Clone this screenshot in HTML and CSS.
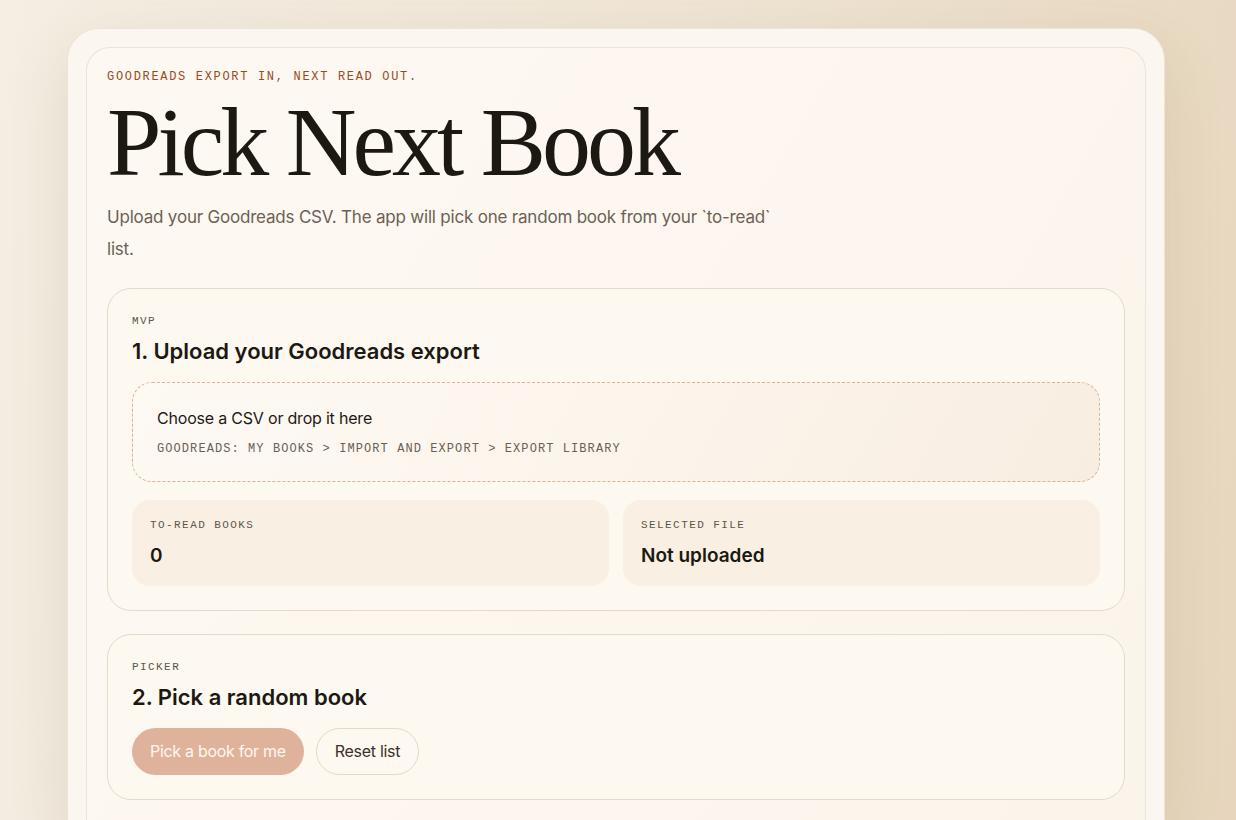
FILE: index.html
```html
<!DOCTYPE html>
<html lang="en">
<head>
  <meta charset="UTF-8" />
  <meta name="viewport" content="width=device-width, initial-scale=1.0"/>
  <title>Pick Next Book</title>
  <link rel="stylesheet" href="styles.css">
</head>
<body>
  <div class="shell">
    <main class="panel">
      <p class="eyebrow">Goodreads export in, next read out.</p>
      <h1 class="title">Pick Next Book</h1>
      <p class="lead">Upload your Goodreads CSV. The app will pick one random book from your `to-read` list.</p>

      <section class="card">
        <p class="card-label">MVP</p>
        <h2 class="card-title">1. Upload your Goodreads export</h2>

        <label class="dropzone" for="csvFile">
          <input type="file" id="csvFile" accept=".csv" />
          <span class="drop-title">Choose a CSV or drop it here</span>
          <span class="drop-hint">Goodreads: My Books &gt; Import and export &gt; Export library</span>
        </label>

        <div class="stats">
          <div class="stat">
            <span class="stat-label">To-read books</span>
            <strong class="stat-value" id="bookCount">0</strong>
          </div>
          <div class="stat">
            <span class="stat-label">Selected file</span>
            <strong class="stat-value" id="fileName">Not uploaded</strong>
          </div>
        </div>
      </section>

      <section class="card">
        <p class="card-label">Picker</p>
        <h2 class="card-title">2. Pick a random book</h2>
        <div class="actions">
          <button class="btn btn-primary" id="pickBtn" disabled>Pick a book for me</button>
          <button class="btn btn-ghost" id="resetBtn">Reset list</button>
        </div>
      </section>
    </main>
  </div>
</body>
</html>
```

FILE: styles.css
```css
* {
  box-sizing: border-box;
}

body {
  margin: 0;
  min-height: 100vh;
  font-family: 'Inter', 'Noto Sans', sans-serif;
  color: #1f1a15;
  background: linear-gradient(100deg, #f4eee3 0%, #efe5d5 50%, #e7d6bd 100%);
  padding: 28px 0 0;
}

.shell {
  width: 1098px;
  margin: 0 0 0 67px;
  padding: 18px 18px 0;
  background: #fbf7f0;
  border-radius: 32px 32px 0 0;
  box-shadow: 0 20px 60px rgba(120, 90, 50, 0.14);
  border: 1px solid #ece4d6;
  border-bottom: none;
}

.panel {
  padding: 22px 20px 24px;
  border: 1px solid #ebe3d6;
  border-bottom: none;
  border-radius: 24px 24px 0 0;
  background: linear-gradient(120deg, #fdf9f2 0%, #fdf6ef 60%, #fbf4ea 100%);
  min-height: 780px;
}

.eyebrow {
  margin: 0;
  font-family: 'Liberation Mono', monospace;
  font-size: 12px;
  letter-spacing: 0.14em;
  text-transform: uppercase;
  color: #9a4a24;
}

.title {
  margin: 5px 0 0;
  font-family: 'Liberation Serif', serif;
  font-weight: 400;
  font-size: 98px;
  line-height: 1.1;
  letter-spacing: -4px;
  color: #1c1913;
}

.lead {
  margin: 4px 0 0;
  max-width: 690px;
  font-size: 17px;
  line-height: 32px;
  color: #6b6157;
  letter-spacing: -0.2px;
}

.card {
  margin-top: 23px;
  padding: 26px 24px 24px;
  border: 1px solid #e3dccd;
  border-radius: 24px;
  background: #fdf8f0;
}

.card + .card {
  margin-top: 23px;
}

.card-label {
  margin: 0;
  font-family: 'Liberation Mono', monospace;
  font-size: 11px;
  letter-spacing: 0.13em;
  text-transform: uppercase;
  color: #5e554b;
}

.card-title {
  margin: 11px 0 0;
  font-size: 22px;
  font-weight: 600;
  letter-spacing: 0;
  color: #1c1913;
}

.dropzone {
  display: flex;
  flex-direction: column;
  gap: 14px;
  margin-top: 18px;
  padding: 25px 24px 25px;
  border: 1px dashed #d9b49c;
  border-radius: 20px;
  background: linear-gradient(120deg, #fdf9f3 0%, #fcf5ec 50%, #f8ede1 100%);
  cursor: pointer;
}

.dropzone input {
  display: none;
}

.drop-title {
  font-size: 16px;
  color: #1f1a15;
  letter-spacing: -0.2px;
}

.drop-hint {
  font-family: 'Liberation Mono', monospace;
  font-size: 12px;
  letter-spacing: 0.09em;
  text-transform: uppercase;
  color: #6a6056;
}

.stats {
  display: grid;
  grid-template-columns: 1fr 1fr;
  gap: 14px;
  margin-top: 18px;
}

.stat {
  display: flex;
  flex-direction: column;
  gap: 13px;
  padding: 19px 18px 19px;
  border-radius: 18px;
  background: #f9f0e3;
}

.stat-label {
  font-family: 'Liberation Mono', monospace;
  font-size: 11px;
  letter-spacing: 0.13em;
  text-transform: uppercase;
  color: #5e554b;
}

.stat-value {
  font-size: 19px;
  font-weight: 600;
  color: #1c1913;
}

.actions {
  display: flex;
  gap: 12px;
  margin-top: 18px;
}

.btn {
  height: 47px;
  padding: 0 18px;
  border-radius: 999px;
  font-family: 'Inter', 'Noto Sans', sans-serif;
  font-size: 16px;
  letter-spacing: -0.3px;
  cursor: pointer;
}

.btn-primary {
  border: none;
  background: #dfb39b;
  color: #fdf6ef;
}

.btn-primary:disabled {
  cursor: default;
}

.btn-ghost {
  border: 1px solid #e2d9c8;
  background: #fdf8f0;
  color: #3a322b;
}
```
